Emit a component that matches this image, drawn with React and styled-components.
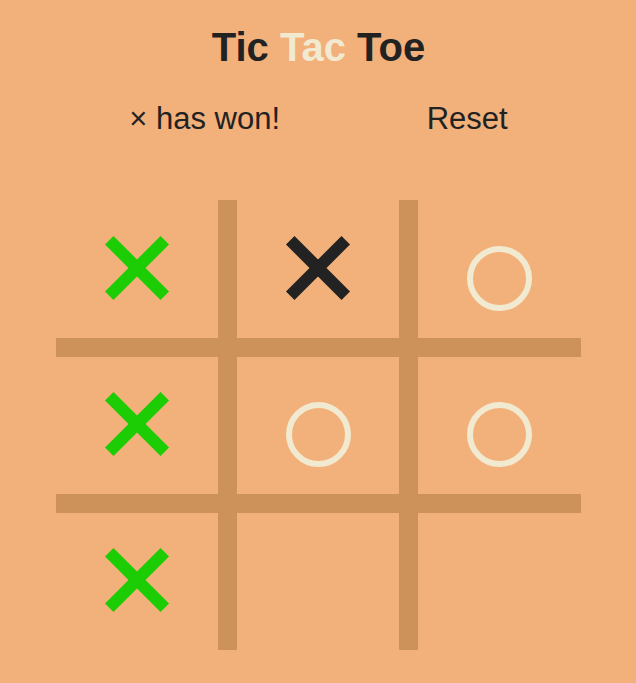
import React, { useState } from 'react';
import styled, { createGlobalStyle } from 'styled-components';

const GlobalStyle = createGlobalStyle`
  html, body {
    margin: 0;
    padding: 0;
    background: #f2b07a;
  }
  body {
    font-family: "Liberation Sans", Arial, sans-serif;
    color: #222222;
  }
`;

const Page = styled.div`
  width: 525px;
  padding: 25px 55px 0 56px;
`;

const Title = styled.h1`
  margin: 0;
  font-size: 40px;
  font-weight: bold;
  text-align: center;
  color: #222222;
`;

const Accent = styled.span`
  color: #f2ead0;
`;

const StatusBar = styled.div`
  margin-top: 31px;
  display: flex;
  justify-content: space-around;
  align-items: center;
  font-size: 31px;
`;

const Status = styled.div`
  color: #222222;
`;

const ResetButton = styled.button`
  border: none;
  background: transparent;
  padding: 0;
  font-family: inherit;
  font-size: 31px;
  color: #222222;
  cursor: pointer;
`;

const Board = styled.div`
  margin-top: 63px;
  display: grid;
  grid-template-columns: 162px 162px 163px;
  grid-template-rows: 138px 137px 137px;
  gap: 19px;
  width: 525px;
  height: 450px;
  background: #cd915a;
`;

const Cell = styled.div`
  background: #f2b07a;
  display: flex;
  align-items: center;
  justify-content: center;
`;

const Nought = styled.div`
  box-sizing: border-box;
  width: 65px;
  height: 65px;
  margin-top: 18px;
  border: 6px solid #f2ead0;
  border-radius: 50%;
`;

const CrossSvg = styled.svg`
  display: block;
  width: 64px;
  height: 64px;
  margin-top: -3px;
`;

function Cross({ color }) {
  return (
    <CrossSvg viewBox="0 0 64 64">
      <line x1="4.24" y1="4.24" x2="59.76" y2="59.76" stroke={color} strokeWidth="12" />
      <line x1="59.76" y1="4.24" x2="4.24" y2="59.76" stroke={color} strokeWidth="12" />
    </CrossSvg>
  );
}

const initial = ['x', 'X', 'o', 'x', 'o', 'o', 'x', null, null];

export default function App() {
  const [cells, setCells] = useState(initial);

  return (
    <Page>
      <GlobalStyle />
      <Title>
        Tic <Accent>Tac</Accent> Toe
      </Title>
      <StatusBar>
        <Status>× has won!</Status>
        <ResetButton onClick={() => setCells(Array(9).fill(null))}>Reset</ResetButton>
      </StatusBar>
      <Board>
        {cells.map((c, i) => (
          <Cell key={i}>
            {c === 'x' && <Cross color="#1ccc04" />}
            {c === 'X' && <Cross color="#222222" />}
            {c === 'o' && <Nought />}
          </Cell>
        ))}
      </Board>
    </Page>
  );
}
